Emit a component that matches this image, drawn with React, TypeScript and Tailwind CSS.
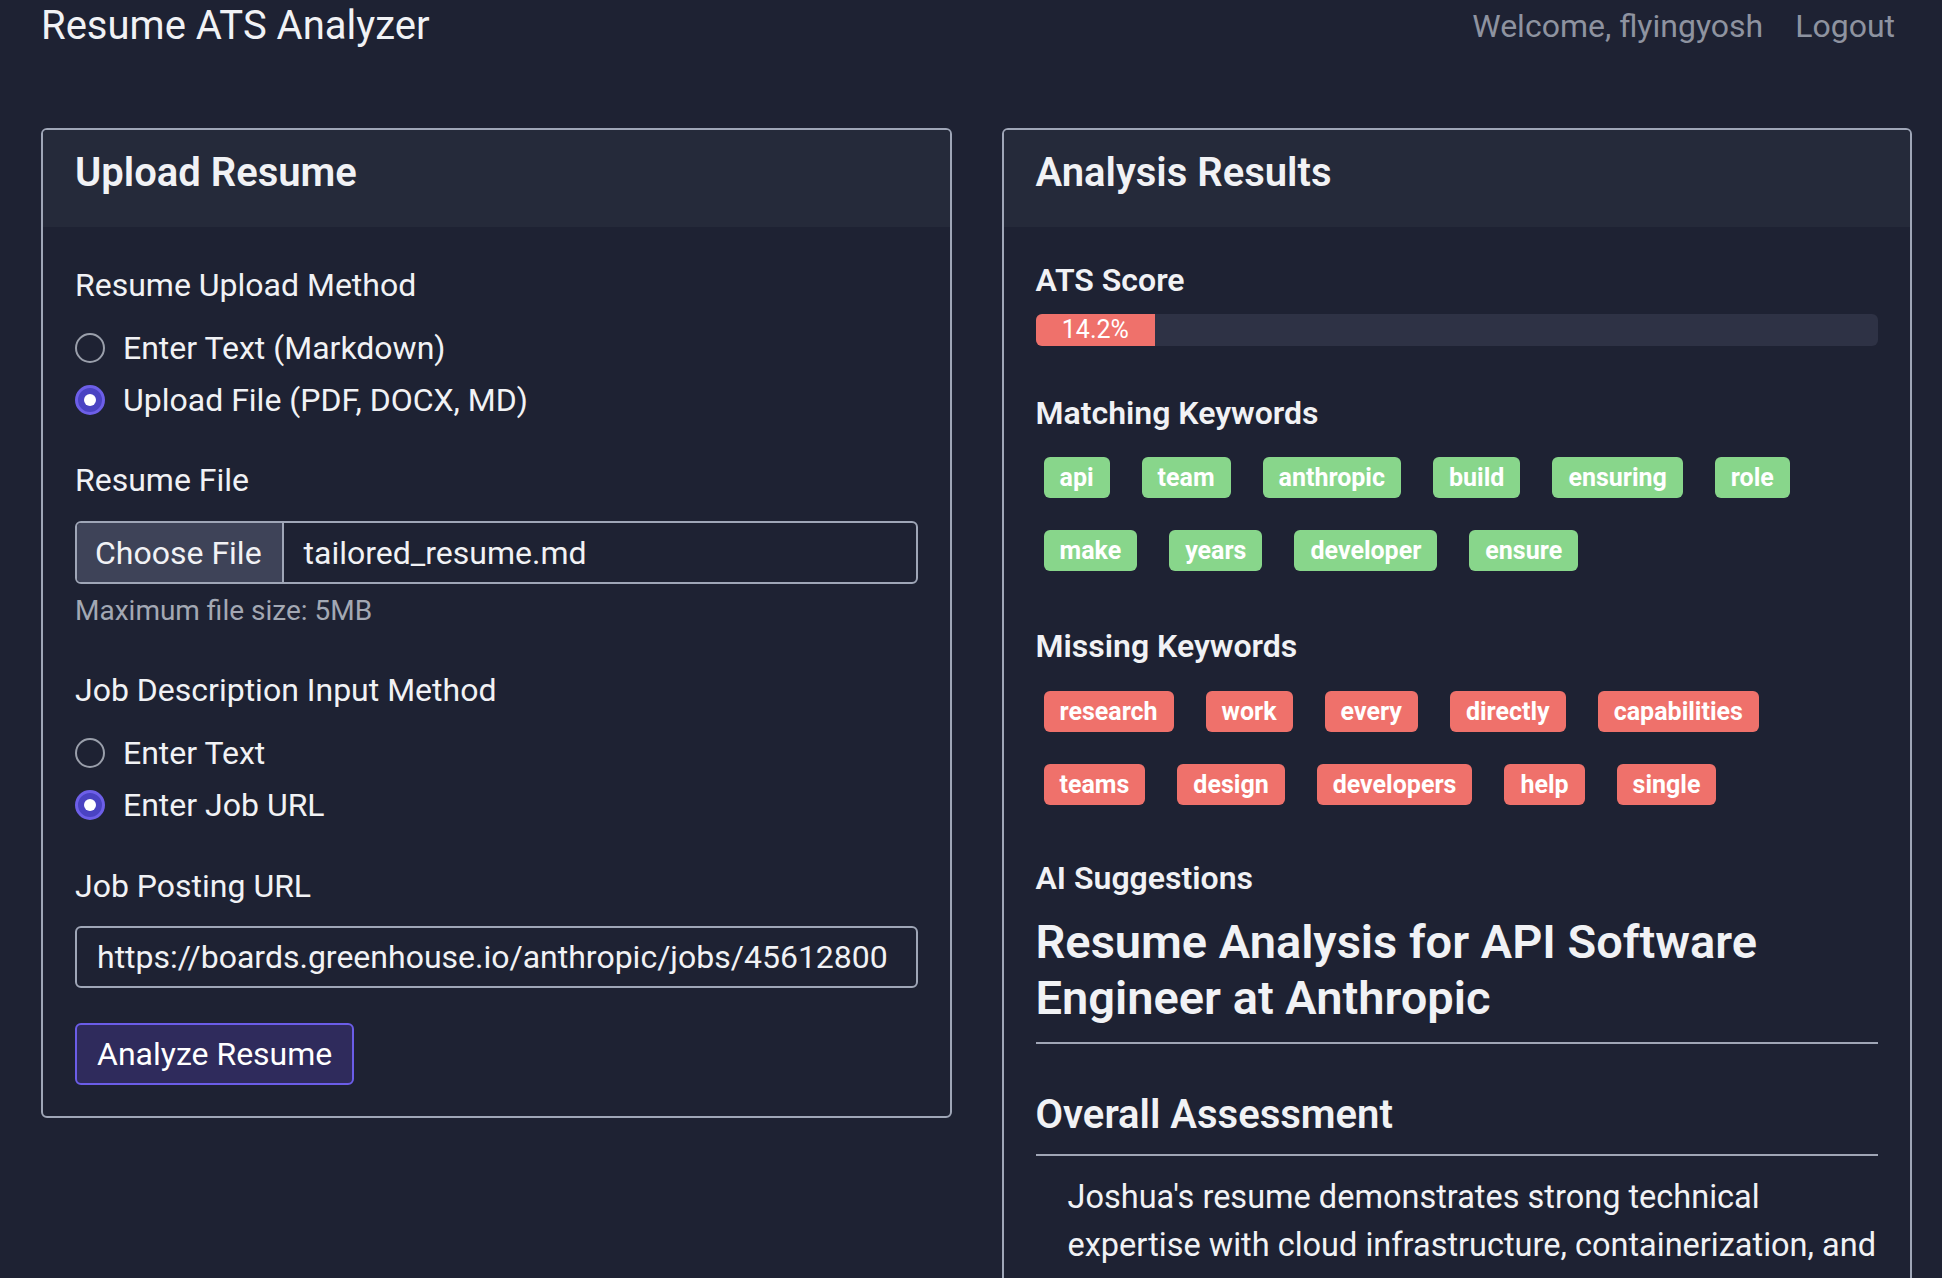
import type { ReactNode } from "react";

const matchingKeywords = ["api", "team", "anthropic", "build", "ensuring", "role", "make", "years", "developer", "ensure"];
const missingKeywords = ["research", "work", "every", "directly", "capabilities", "teams", "design", "developers", "help", "single"];
const atsScore = 14.2;

function Card({ title, bodyClass, children }: { title: string; bodyClass: string; children: ReactNode }) {
  return (
    <section className="overflow-hidden rounded-md border-2 border-[#9fa6b7]">
      <div className="flex h-[97px] items-center bg-[#252a3a] px-8 pb-3">
        <h2 className="text-[40px] font-semibold leading-none">{title}</h2>
      </div>
      <div className={bodyClass}>{children}</div>
    </section>
  );
}

function Radio({ label, checked }: { label: string; checked?: boolean }) {
  return (
    <label className="flex h-[52px] items-center gap-[18px] text-[32px]">
      {checked ? (
        <span className="flex size-[30px] items-center justify-center rounded-full border-[3px] border-[#6d5fe8] bg-[#4a43c2]">
          <span className="size-[12px] rounded-full bg-white" />
        </span>
      ) : (
        <span className="size-[30px] rounded-full border-2 border-[#9a9fab]" />
      )}
      {label}
    </label>
  );
}

function Tag({ word, color }: { word: string; color: "green" | "red" }) {
  return (
    <span
      className={
        color === "green"
          ? "m-2 flex h-[41px] items-center rounded-md bg-[#88d68b] px-4 text-[25px] font-bold text-white"
          : "m-2 flex h-[41px] items-center rounded-md bg-[#ef716b] px-4 text-[25px] font-bold text-white"
      }
    >
      {word}
    </span>
  );
}

function UploadCard() {
  return (
    <Card title="Upload Resume" bodyClass="px-8 pt-[38px] pb-[31px]">
      <p className="h-10 text-[32px] leading-10">Resume Upload Method</p>
      <div className="mt-[17px]">
        <Radio label="Enter Text (Markdown)" />
        <Radio label="Upload File (PDF, DOCX, MD)" checked />
      </div>

      <p className="mt-[34px] h-10 text-[32px] leading-10">Resume File</p>
      <div className="mt-[21px] flex h-[63px] overflow-hidden rounded-md border-2 border-[#9fa6b7] text-[32px]">
        <span className="flex items-center border-r-2 border-[#9fa6b7] bg-[#3e4358] pl-[18px] pr-5">Choose File</span>
        <span className="flex items-center px-5">tailored_resume.md</span>
      </div>
      <p className="mt-[9px] text-[28px] leading-9 text-[#a3a8b3]">Maximum file size: 5MB</p>

      <p className="mt-[41px] h-10 text-[32px] leading-10">Job Description Input Method</p>
      <div className="mt-[17px]">
        <Radio label="Enter Text" />
        <Radio label="Enter Job URL" checked />
      </div>

      <p className="mt-[35px] h-10 text-[32px] leading-10">Job Posting URL</p>
      <input
        readOnly
        defaultValue="https://boards.greenhouse.io/anthropic/jobs/45612800"
        className="mt-5 block h-[62px] w-full rounded-md border-2 border-[#9fa6b7] bg-transparent px-5 text-[32px] text-[#f1f2f5] outline-none"
      />

      <button className="mt-[35px] h-[62px] rounded-md border-2 border-[#6b5de8] bg-[#2f2b5c] px-5 text-[32px] text-white">
        Analyze Resume
      </button>
    </Card>
  );
}

function ResultsCard() {
  return (
    <Card title="Analysis Results" bodyClass="px-8 pt-[33px] pb-8">
      <h3 className="text-[32px] font-semibold leading-10">ATS Score</h3>
      <div className="mt-[14px] h-8 overflow-hidden rounded-md bg-[#2e3245]">
        <div
          className="flex h-full items-center justify-center bg-[#ef716b] text-[25px] text-white"
          style={{ width: `${atsScore}%` }}
        >
          {atsScore}%
        </div>
      </div>

      <h3 className="mt-[47px] text-[32px] font-semibold leading-10">Matching Keywords</h3>
      <div className="mt-4 flex flex-wrap gap-4">
        {matchingKeywords.map((w) => (
          <Tag key={w} word={w} color="green" />
        ))}
      </div>

      <h3 className="mt-[47px] text-[32px] font-semibold leading-10">Missing Keywords</h3>
      <div className="mt-[17px] flex flex-wrap gap-4">
        {missingKeywords.map((w) => (
          <Tag key={w} word={w} color="red" />
        ))}
      </div>

      <h3 className="mt-[45px] text-[32px] font-semibold leading-10">AI Suggestions</h3>
      <div className="mt-[16px]">
        <h1 className="border-b-2 border-[#a0a6b6] pb-4 text-[47px] font-semibold leading-[56px]">
          Resume Analysis for API Software Engineer at Anthropic
        </h1>
        <h2 className="mt-[47px] border-b-2 border-[#a0a6b6] pb-[15px] text-[40px] font-semibold leading-[48px]">
          Overall Assessment
        </h2>
        <p className="mt-[17px] whitespace-nowrap pl-8 text-[32.5px] leading-[48px]">
          Joshua's resume demonstrates strong technical
          <br />
          expertise with cloud infrastructure, containerization, and
          <br />
          DevOps practices, but it is light on API design and
          <br />
          developer-facing product work.
        </p>
      </div>
    </Card>
  );
}

export default function App() {
  return (
    <div className="min-h-screen bg-[#1e2233] font-['Roboto',sans-serif] text-[#f1f2f5]">
      <header className="flex h-[52px] items-center justify-between pl-[41px] pr-[47px]">
        <h1 className="text-[40px] leading-none">Resume ATS Analyzer</h1>
        <nav className="flex items-center gap-8 text-[32px] text-[#8e93a0]">
          <span>Welcome, flyingyosh</span>
          <a href="#">Logout</a>
        </nav>
      </header>
      <main className="mt-[76px] grid grid-cols-2 items-start gap-[50px] pl-[41px] pr-[30px]">
        <UploadCard />
        <ResultsCard />
      </main>
    </div>
  );
}
